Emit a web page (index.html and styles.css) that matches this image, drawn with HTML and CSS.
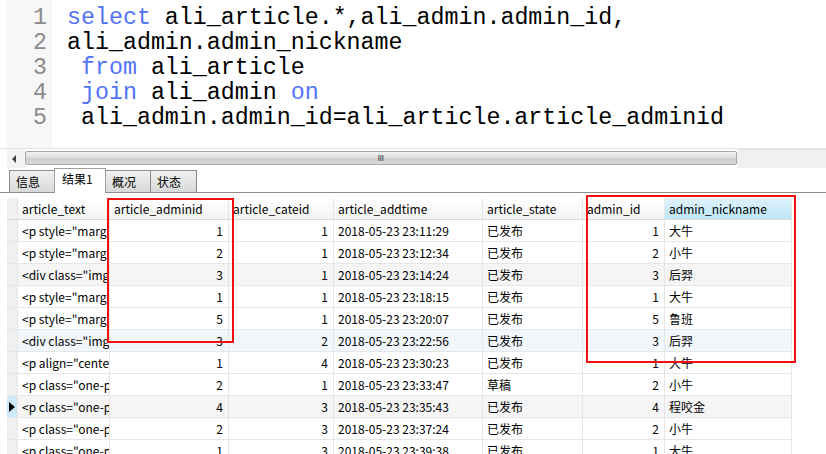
FILE: index.html
```html
<!DOCTYPE html>
<html>
<head>
<meta charset="utf-8">
<link rel="stylesheet" href="styles.css">
</head>
<body>
<div class="page">
  <div class="editor">
    <div class="gutter">
      <div>1</div><div>2</div><div>3</div><div>4</div><div>5</div>
    </div>
    <div class="code">
      <div class="ln"><span class="kw">select</span> ali_article.*,ali_admin.admin_id,</div>
      <div class="ln">ali_admin.admin_nickname</div>
      <div class="ln"> <span class="kw">from</span> ali_article</div>
      <div class="ln"> <span class="kw">join</span> ali_admin <span class="kw">on</span></div>
      <div class="ln"> ali_admin.admin_id=ali_article.article_adminid</div>
    </div>
  </div>
  <div class="hscroll">
    <div class="arrow"><svg width="6" height="8" viewBox="0 0 6 8"><path d="M5 0 L1 4 L5 8 Z" fill="#404040"/></svg></div>
    <div class="thumb"><span class="grip">III</span></div>
    <div class="rest"></div>
  </div>
  <div class="tabs">
    <div class="tab">信息</div>
    <div class="tab active">结果1</div>
    <div class="tab">概况</div>
    <div class="tab">状态</div>
    <div class="tabfill"></div>
  </div>
  <div class="gridwrap">
    <div class="grid">
      <div class="row head">
        <div class="ind"></div>
        <div class="c">article_text</div>
        <div class="c">article_adminid</div>
        <div class="c">article_cateid</div>
        <div class="c">article_addtime</div>
        <div class="c">article_state</div>
        <div class="c">admin_id</div>
        <div class="c sel">admin_nickname</div>
      </div>
      <div class="row">
        <div class="ind"></div><div class="c">&lt;p style="margin-top:0px"</div><div class="c n">1</div><div class="c n">1</div><div class="c">2018-05-23 23:11:29</div><div class="c">已发布</div><div class="c n">1</div><div class="c">大牛</div>
      </div>
      <div class="row">
        <div class="ind"></div><div class="c">&lt;p style="margin-top:0px"</div><div class="c n">2</div><div class="c n">1</div><div class="c">2018-05-23 23:12:34</div><div class="c">已发布</div><div class="c n">2</div><div class="c">小牛</div>
      </div>
      <div class="row gray">
        <div class="ind"></div><div class="c">&lt;div class="img-box"&gt;</div><div class="c n">3</div><div class="c n">1</div><div class="c">2018-05-23 23:14:24</div><div class="c">已发布</div><div class="c n">3</div><div class="c">后羿</div>
      </div>
      <div class="row">
        <div class="ind"></div><div class="c">&lt;p style="margin-top:0px"</div><div class="c n">1</div><div class="c n">1</div><div class="c">2018-05-23 23:18:15</div><div class="c">已发布</div><div class="c n">1</div><div class="c">大牛</div>
      </div>
      <div class="row">
        <div class="ind"></div><div class="c">&lt;p style="margin-top:0px"</div><div class="c n">5</div><div class="c n">1</div><div class="c">2018-05-23 23:20:07</div><div class="c">已发布</div><div class="c n">5</div><div class="c">鲁班</div>
      </div>
      <div class="row blue">
        <div class="ind"></div><div class="c">&lt;div class="img-box"&gt;</div><div class="c n">3</div><div class="c n">2</div><div class="c">2018-05-23 23:22:56</div><div class="c">已发布</div><div class="c n">3</div><div class="c">后羿</div>
      </div>
      <div class="row">
        <div class="ind"></div><div class="c">&lt;p align="center"&gt;</div><div class="c n">1</div><div class="c n">4</div><div class="c">2018-05-23 23:30:23</div><div class="c">已发布</div><div class="c n">1</div><div class="c">大牛</div>
      </div>
      <div class="row">
        <div class="ind"></div><div class="c">&lt;p class="one-p"&gt;</div><div class="c n">2</div><div class="c n">1</div><div class="c">2018-05-23 23:33:47</div><div class="c">草稿</div><div class="c n">2</div><div class="c">小牛</div>
      </div>
      <div class="row gray current">
        <div class="ind"><svg width="6" height="10" viewBox="0 0 6 10"><path d="M0 0 L6 5 L0 10 Z" fill="#000"/></svg></div><div class="c">&lt;p class="one-p"&gt;</div><div class="c n">4</div><div class="c n">3</div><div class="c">2018-05-23 23:35:43</div><div class="c">已发布</div><div class="c n">4</div><div class="c">程咬金</div>
      </div>
      <div class="row">
        <div class="ind"></div><div class="c">&lt;p class="one-p"&gt;</div><div class="c n">2</div><div class="c n">3</div><div class="c">2018-05-23 23:37:24</div><div class="c">已发布</div><div class="c n">2</div><div class="c">小牛</div>
      </div>
      <div class="row">
        <div class="ind"></div><div class="c">&lt;p class="one-p"&gt;</div><div class="c n">1</div><div class="c n">3</div><div class="c">2018-05-23 23:39:38</div><div class="c">已发布</div><div class="c n">1</div><div class="c">大牛</div>
      </div>
    </div>
    <div class="mark mark1"></div>
    <div class="mark mark2"></div>
  </div>
</div>
</body>
</html>
```

FILE: styles.css
```css
* { box-sizing: border-box; }
html, body { margin: 0; padding: 0; background: #fff; }
body { width: 826px; height: 454px; overflow: hidden; }
.page { width: 826px; height: 454px; overflow: hidden; position: relative; }

.editor {
  display: flex;
  height: 149px;
  padding-left: 7px;
  border-bottom: 1px solid #e4e4e4;
  background: #fff;
  overflow: hidden;
}
.gutter {
  width: 45px;
  flex: none;
  background: #f7f7f7;
  padding-top: 6px;
  padding-right: 5px;
  text-align: right;
  font-family: "Liberation Mono", monospace;
  font-size: 23.2px;
  line-height: 25px;
  color: #8a8a8a;
}
.code {
  padding-left: 15px;
  padding-top: 6px;
  font-family: "Liberation Mono", monospace;
  font-size: 23.3px;
  line-height: 25px;
  color: #000;
}
.ln { white-space: pre; height: 25px; }
.kw { color: #5274f5; }

.hscroll {
  display: flex;
  height: 19px;
  padding-left: 7px;
  background: #fff;
}
.arrow {
  width: 18px;
  display: flex;
  align-items: center;
  justify-content: center;
  background: #f4f4f4;
  padding-right: 4px;
}
.thumb {
  width: 712px;
  margin: 2px 0 3px 0;
  border: 1px solid #a8a8a8;
  border-radius: 2px;
  background: linear-gradient(#f2f2f2, #e0e0e0 45%, #cfcfcf 55%, #d8d8d8);
  display: flex;
  align-items: center;
  justify-content: center;
}
.grip {
  font-family: "Liberation Sans", sans-serif;
  font-size: 9px;
  color: #606060;
  font-weight: bold;
  transform: scaleX(0.8);
}
.rest {
  flex: 1;
  background: #f0f0f0;
  border-top: 1px solid #e2e2e2;
}

.tabs {
  display: flex;
  align-items: flex-end;
  height: 25px;
  padding-left: 9px;
  border-bottom: 1px solid #8c8c8c;
  font-family: "Noto Sans CJK SC", "Noto Sans", sans-serif;
  font-size: 12px;
  color: #000;
}
.tab {
  height: 22px;
  width: 46px;
  padding-left: 6px;
  line-height: 21px;
  background: linear-gradient(#f0f0f0, #d9d9d9);
  border: 1px solid #8c8c8c;
  border-bottom: none;
  margin-right: -1px;
}
.tab.active {
  height: 25px;
  width: 52px;
  padding-left: 7px;
  line-height: 20px;
  background: #fff;
  border-color: #a0a0a0;
  margin-bottom: -1px;
  position: relative;
  z-index: 1;
}
.tab:nth-child(4) { width: 47px; }
.tabfill { flex: 1; }

.gridwrap {
  position: relative;
  margin-top: 5px;
  padding-left: 7px;
}
.grid {
  width: 785px;
  font-family: "Noto Sans CJK SC", "Noto Sans", sans-serif;
  font-size: 12px;
  color: #000;
}
.row {
  display: grid;
  grid-template-columns: 11px 92px 119px 105px 149px 100px 82px 127px;
  height: 22px;
}
.row > div {
  border-right: 1px solid #e6e6e6;
  border-bottom: 1px solid #e6e6e6;
  overflow: hidden;
  white-space: nowrap;
  line-height: 21px;
}
.c { padding-left: 4px; }
.c.n { text-align: right; padding-left: 0; padding-right: 5px; }
.ind {
  background: #f0f0f0;
  display: flex;
  align-items: center;
  justify-content: center;
}
.head > div {
  background: linear-gradient(#ffffff, #f4f4f4);
  border-bottom: 1px solid #dadada;
}
.head > .sel { background: linear-gradient(#dff2fb, #bde6f8); }
.head > .ind { background: #f0f0f0; }
.row.gray > .c { background: #f5f5f5; }
.row.blue > .c { background: #f2f7fc; }
.row.current > .ind { background: #cde8f8; }

.mark {
  position: absolute;
  border: 2px solid #f01010;
  pointer-events: none;
}
.mark1 { left: 107px; top: 0px; width: 127px; height: 145px; }
.mark2 { left: 586px; top: -3px; width: 210px; height: 168px; }
```
